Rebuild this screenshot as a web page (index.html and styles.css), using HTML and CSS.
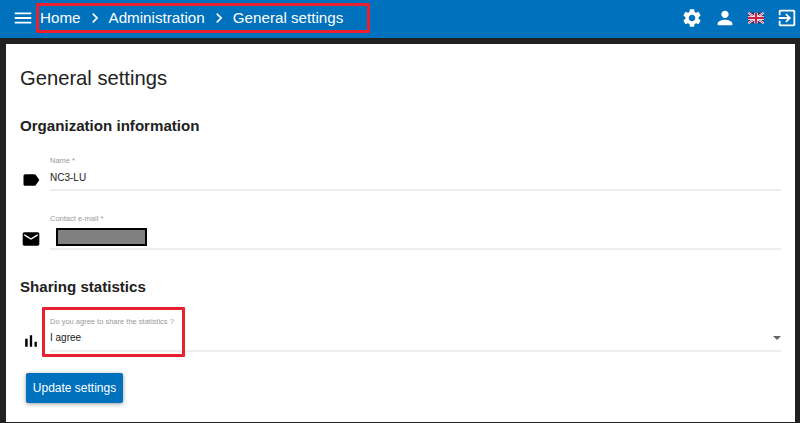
FILE: index.html
```html
<!DOCTYPE html>
<html lang="en">
<head>
    <meta charset="UTF-8">
    <meta name="viewport" content="width=device-width, initial-scale=1.0">
    <title>General settings</title>
    <link rel="stylesheet" href="styles.css">
</head>
<body>

<!-- top bar -->
<header class="toolbar">
    <svg class="menu-icon" viewBox="0 0 24 24" width="22" height="22"><path d="M3 18h18v-2H3v2zm0-5h18v-2H3v2zm0-7v2h18V6H3z"/></svg>
    <nav class="crumbs">
        <span>Home</span>
        <svg viewBox="0 0 24 24" width="20" height="20"><path d="M10 6L8.59 7.41 13.17 12l-4.58 4.59L10 18l6-6z"/></svg>
        <span>Administration</span>
        <svg viewBox="0 0 24 24" width="20" height="20"><path d="M10 6L8.59 7.41 13.17 12l-4.58 4.59L10 18l6-6z"/></svg>
        <span>General settings</span>
    </nav>
    <div class="toolbar-icons">
        <svg viewBox="0 0 24 24" width="22" height="22"><path d="M19.14 12.94c.04-.3.06-.61.06-.94 0-.32-.02-.64-.07-.94l2.03-1.58c.18-.14.23-.41.12-.61l-1.92-3.32c-.12-.22-.37-.29-.59-.22l-2.39.96c-.5-.38-1.03-.7-1.62-.94l-.36-2.54c-.04-.24-.24-.41-.48-.41h-3.84c-.24 0-.43.17-.47.41l-.36 2.54c-.59.24-1.13.57-1.62.94l-2.39-.96c-.22-.08-.47 0-.59.22L2.74 8.87c-.12.21-.08.47.12.61l2.03 1.58c-.05.3-.09.63-.09.94s.02.64.07.94l-2.03 1.58c-.18.14-.23.41-.12.61l1.92 3.32c.12.22.37.29.59.22l2.39-.96c.5.38 1.03.7 1.62.94l.36 2.54c.05.24.24.41.48.41h3.84c.24 0 .44-.17.47-.41l.36-2.54c.59-.24 1.13-.56 1.62-.94l2.39.96c.22.08.47 0 .59-.22l1.92-3.32c.12-.22.07-.47-.12-.61l-2.01-1.58zM12 15.6c-1.98 0-3.6-1.62-3.6-3.6s1.62-3.6 3.6-3.6 3.6 1.62 3.6 3.6-1.62 3.6-3.6 3.6z"/></svg>
        <svg viewBox="0 0 24 24" width="22" height="22"><path d="M12 12c2.21 0 4-1.79 4-4s-1.79-4-4-4-4 1.79-4 4 1.79 4 4 4zm0 2c-2.67 0-8 1.34-8 4v2h16v-2c0-2.66-5.33-4-8-4z"/></svg>
        <svg class="flag" viewBox="0 0 60 40" width="16" height="12">
            <rect width="60" height="40" fill="#2a2f6e"/>
            <path d="M0 0L60 40M60 0L0 40" stroke="#fff" stroke-width="8"/>
            <path d="M0 0L60 40M60 0L0 40" stroke="#d0213f" stroke-width="3"/>
            <path d="M30 0V40M0 20H60" stroke="#fff" stroke-width="13"/>
            <path d="M30 0V40M0 20H60" stroke="#d0213f" stroke-width="8"/>
        </svg>
        <svg viewBox="0 0 24 24" width="22" height="22"><path d="M10.09 15.59L11.5 17l5-5-5-5-1.41 1.41L12.67 11H3v2h9.67l-2.58 2.59zM19 3H5c-1.11 0-2 .9-2 2v4h2V5h14v14H5v-4H3v4c0 1.1.89 2 2 2h14c1.1 0 2-.9 2-2V5c0-1.1-.9-2-2-2z"/></svg>
    </div>
</header>

<main class="card">
    <h1>General settings</h1>

    <h2 class="first-title">Organization information</h2>

    <div class="field field-name">
        <svg viewBox="0 0 24 24" width="20" height="20"><path d="M17.63 5.84C17.27 5.33 16.67 5 16 5L5 5.01C3.9 5.01 3 5.9 3 7v10c0 1.1.9 1.99 2 1.99L16 19c.67 0 1.27-.33 1.63-.84L22 12l-4.37-6.16z"/></svg>
        <div class="control">
            <label>Name *</label>
            <div class="value">NC3-LU</div>
        </div>
    </div>

    <div class="field field-mail">
        <svg viewBox="0 0 24 24" width="22" height="22"><path d="M20 4H4c-1.1 0-1.99.9-1.99 2L2 18c0 1.1.9 2 2 2h16c1.1 0 2-.9 2-2V6c0-1.1-.9-2-2-2zm0 4l-8 5-8-5V6l8 5 8-5v2z"/></svg>
        <div class="control">
            <label>Contact e-mail *</label>
            <div class="value"><span class="redacted"></span></div>
        </div>
    </div>

    <h2 class="second-title">Sharing statistics</h2>

    <div class="field field-select">
        <svg viewBox="0 0 24 24" width="20" height="20"><path d="M5 9.2h3V19H5zM10.6 5h2.8v14h-2.8zm5.6 8H19v6h-2.8z"/></svg>
        <div class="control">
            <label>Do you agree to share the statistics ?</label>
            <div class="value">I agree</div>
            <span class="arrow"></span>
        </div>
        <div class="mark mark-select"></div>
    </div>

    <button class="update-button">Update settings</button>
</main>

<div class="mark mark-crumbs"></div>

</body>
</html>
```

FILE: styles.css
```css
body {
    font-family: "Liberation Sans", Arial, sans-serif;
    background-color: #212121;
    margin: 0;
    padding: 0;
    height: 423px;
    overflow: hidden;
    color: #212121;
}

.toolbar {
    height: 38px;
    box-sizing: border-box;
    background-color: #0071bc;
    display: flex;
    align-items: center;
    padding: 0 2px 2px 12px;
    color: #fff;
    fill: #fff;
}

.menu-icon {
    margin-right: 6px;
}

.crumbs {
    display: flex;
    align-items: center;
    font-size: 15.2px;
    gap: 4px;
}

.crumbs span {
    padding-bottom: 2px;
}

.toolbar-icons {
    margin-left: auto;
    display: flex;
    align-items: center;
    gap: 11px;
}

.flag {
    margin: 0 1px;
}

.card {
    background-color: #fff;
    margin: 6px 5px 0 6px;
    height: 378px;
    padding: 0 14px;
    box-sizing: border-box;
    overflow: hidden;
}

h1 {
    font-size: 20.2px;
    font-weight: 400;
    margin: 22px 0 0;
    line-height: 24px;
}

h2 {
    font-size: 15.1px;
    font-weight: 700;
    margin: 0;
    line-height: 18px;
}

.first-title {
    margin-top: 27px;
}

.second-title {
    margin-top: 28px;
}

.field {
    display: flex;
    align-items: flex-end;
    position: relative;
    margin-top: 21px;
}

.field svg {
    flex: none;
    margin-left: 1px;
    margin-bottom: 1px;
    width: 20px;
}

.control {
    flex: 1;
    margin-left: 9px;
    border-bottom: 2px solid #eee;
    height: 33px;
    position: relative;
}

.field-mail {
    margin-top: 23px;
}

.field-mail svg {
    margin-bottom: 0;
}

.field-mail .control {
    height: 34px;
}

label {
    display: block;
    font-size: 7.5px;
    line-height: 9px;
    color: #999;
}

.value {
    font-size: 10px;
    line-height: 12px;
    margin-top: 7px;
}

.field-select .value {
    margin-top: 6px;
}

.redacted {
    display: block;
    width: 87px;
    height: 14px;
    margin: -2px 0 0 6px;
    background-color: #808080;
    border: 2px solid #000;
}

.arrow {
    position: absolute;
    right: 0;
    top: 19px;
    border-left: 4px solid transparent;
    border-right: 4px solid transparent;
    border-top: 4px solid #666;
}

.update-button {
    display: block;
    margin: 21px 0 0 6px;
    width: 97px;
    height: 30px;
    padding: 0;
    background-color: #0071bc;
    color: #fff;
    border: none;
    border-radius: 2px;
    font-family: inherit;
    font-size: 12px;
    box-shadow: 0 1px 4px rgba(0, 0, 0, 0.4);
}

/* red annotation frames */
.mark {
    position: absolute;
    border: 3px solid #e8202f;
    border-radius: 1px;
    box-sizing: border-box;
}

.mark-crumbs {
    left: 36px;
    top: 3px;
    width: 334px;
    height: 30px;
}

.mark-select {
    left: 22px;
    top: -10px;
    width: 143px;
    height: 50px;
}
```
